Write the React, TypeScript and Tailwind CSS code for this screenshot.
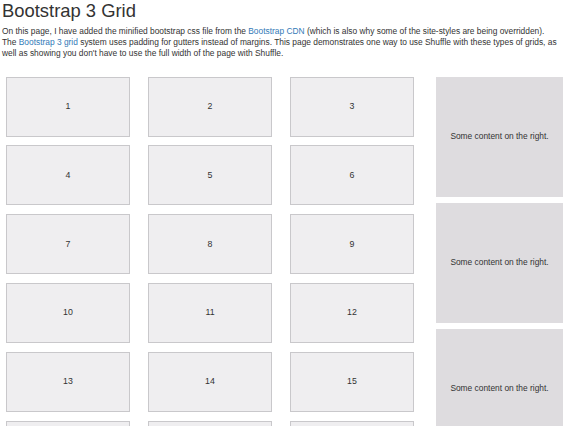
import React from "react";

const nums = Array.from({ length: 18 }, (_, i) => i + 1);

export default function App() {
  return (
    <div className="w-[568px] h-[426px] overflow-hidden bg-white text-[#333333] font-['Liberation_Sans',Arial,sans-serif]">
      <div className="pl-[2px] pr-[4px]">
        <h1 className="text-[18.4px] leading-[20px] pt-[1px] text-[#333333]">Bootstrap 3 Grid</h1>
        <p className="mt-[5px] text-[8.4px] leading-[11.2px]">
          On this page, I have added the minified bootstrap css file from the{" "}
          <span className="text-[#337ab7]">Bootstrap CDN</span> (which is also why some of the site-styles are being
          overridden).
          <br />
          The <span className="text-[#337ab7]">Bootstrap 3 grid</span> system uses padding for gutters instead of
          margins. This page demonstrates one way to use Shuffle with these types of grids, as
          <br />
          well as showing you don't have to use the full width of the page with Shuffle.
        </p>
      </div>
      <div className="flex pl-[6px] mt-[17px] gap-[22px]">
        <div className="grid grid-cols-[124px_124px_124px] gap-x-[18px] gap-y-[8.8px]">
          {nums.map((n) => (
            <div
              key={n}
              className="h-[60px] bg-[#efeef0] border border-[#c9c8cb] flex items-center justify-center text-[8.8px]"
            >
              {n}
            </div>
          ))}
        </div>
        <div className="flex flex-col gap-[6px] w-[127px]">
          {[0, 1, 2].map((i) => (
            <div key={i} className="h-[120px] bg-[#dedcdf] flex items-center justify-center text-[8.4px]">
              Some content on the right.
            </div>
          ))}
        </div>
      </div>
    </div>
  );
}
